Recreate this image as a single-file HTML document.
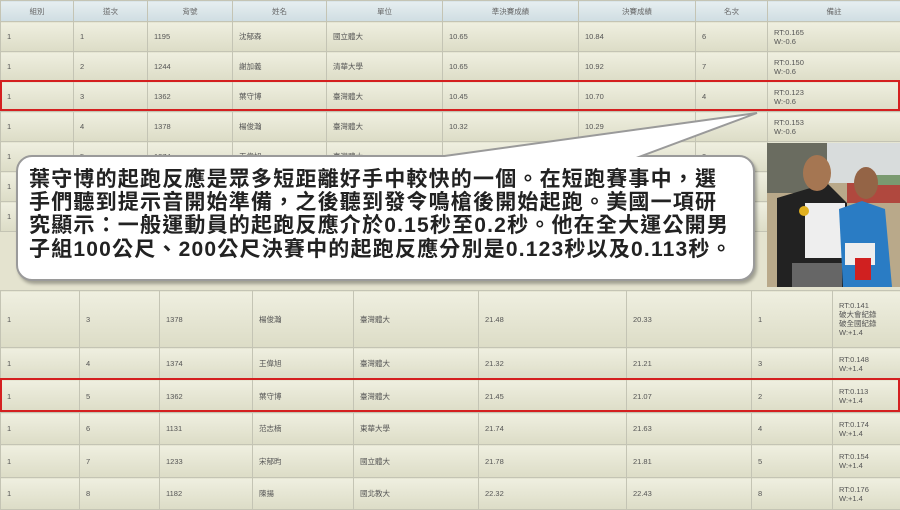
<!DOCTYPE html>
<html><head><meta charset="utf-8"><style>
*{margin:0;padding:0;box-sizing:border-box}
body{width:900px;height:506px;overflow:hidden;background:#e4e3cf;position:relative;font-family:"Liberation Sans","Noto Sans CJK TC",sans-serif;color:#555}
table{position:absolute;left:0;border-collapse:collapse;width:900px;table-layout:fixed}
td,th{border:1px solid #c4c4b4;font-size:7.5px;padding-left:6px;text-align:left;font-weight:normal;line-height:9px}
th{background:linear-gradient(#e6eef0,#cfdde2);text-align:center;padding:0;color:#666}
td{background:linear-gradient(#efefe0,#dcdcc6)}
.red{position:absolute;border:2px solid #d42020}
.call{position:absolute;left:16px;top:155px;width:739px;height:126px;background:#fff;border:2px solid #9a9a9a;border-radius:16px;box-shadow:2px 3px 3px rgba(0,0,0,.3)}
.txt{position:absolute;left:29px;top:168px;font-size:21px;letter-spacing:1.2px;font-weight:bold;color:#222;line-height:23.2px;white-space:nowrap;font-family:"Liberation Sans","Noto Sans CJK TC",sans-serif}
</style></head><body>
<table style="top:0">
<colgroup><col style="width:73px"><col style="width:74px"><col style="width:85px"><col style="width:94px"><col style="width:116px"><col style="width:136px"><col style="width:117px"><col style="width:72px"><col style="width:133px"></colgroup>
<tr style="height:21px"><th>組別</th><th>道次</th><th>背號</th><th>姓名</th><th>單位</th><th>準決賽成績</th><th>決賽成績</th><th>名次</th><th>備註</th></tr>
<tr style="height:30px"><td>1</td><td>1</td><td>1195</td><td>沈郁森</td><td>國立體大</td><td>10.65</td><td>10.84</td><td>6</td><td>RT:0.165<br>W:-0.6</td></tr>
<tr style="height:30px"><td>1</td><td>2</td><td>1244</td><td>謝加義</td><td>清華大學</td><td>10.65</td><td>10.92</td><td>7</td><td>RT:0.150<br>W:-0.6</td></tr>
<tr style="height:30px"><td>1</td><td>3</td><td>1362</td><td>葉守博</td><td>臺灣體大</td><td>10.45</td><td>10.70</td><td>4</td><td>RT:0.123<br>W:-0.6</td></tr>
<tr style="height:30px"><td>1</td><td>4</td><td>1378</td><td>楊俊瀚</td><td>臺灣體大</td><td>10.32</td><td>10.29</td><td></td><td>RT:0.153<br>W:-0.6</td></tr>
<tr style="height:30px"><td>1</td><td>5</td><td>1374</td><td>王偉旭</td><td>臺灣體大</td><td></td><td></td><td>3</td><td></td></tr>
<tr style="height:30px"><td>1</td><td></td><td></td><td></td><td></td><td></td><td></td><td>6</td><td></td></tr>
<tr style="height:30px"><td>1</td><td></td><td></td><td></td><td></td><td></td><td></td><td>7</td><td></td></tr>
</table>
<table style="top:290px">
<colgroup><col style="width:79px"><col style="width:80px"><col style="width:93px"><col style="width:101px"><col style="width:125px"><col style="width:148px"><col style="width:125px"><col style="width:81px"><col style="width:68px"></colgroup>
<tr style="height:57px"><td>1</td><td>3</td><td>1378</td><td>楊俊瀚</td><td>臺灣體大</td><td>21.48</td><td>20.33</td><td>1</td><td>RT:0.141<br>破大會紀錄<br>破全國紀錄<br>W:+1.4</td></tr>
<tr style="height:32px"><td>1</td><td>4</td><td>1374</td><td>王偉旭</td><td>臺灣體大</td><td>21.32</td><td>21.21</td><td>3</td><td>RT:0.148<br>W:+1.4</td></tr>
<tr style="height:33px"><td>1</td><td>5</td><td>1362</td><td>葉守博</td><td>臺灣體大</td><td>21.45</td><td>21.07</td><td>2</td><td>RT:0.113<br>W:+1.4</td></tr>
<tr style="height:32px"><td>1</td><td>6</td><td>1131</td><td>范志楠</td><td>東華大學</td><td>21.74</td><td>21.63</td><td>4</td><td>RT:0.174<br>W:+1.4</td></tr>
<tr style="height:33px"><td>1</td><td>7</td><td>1233</td><td>宋郁昀</td><td>國立體大</td><td>21.78</td><td>21.81</td><td>5</td><td>RT:0.154<br>W:+1.4</td></tr>
<tr style="height:32px"><td>1</td><td>8</td><td>1182</td><td>陳揚</td><td>國北教大</td><td>22.32</td><td>22.43</td><td>8</td><td>RT:0.176<br>W:+1.4</td></tr>
</table>
<div class="red" style="left:0;top:80px;width:900px;height:31px"></div>
<div class="red" style="left:0;top:378px;width:900px;height:34px"></div>
<div class="call"></div>
<svg style="position:absolute;left:0;top:0" width="900" height="506"><polygon points="430,158 757,113 636,158" fill="#fff" stroke="#9a9a9a" stroke-width="2"/><rect x="420" y="157" width="230" height="6" fill="#fff"/></svg>
<div class="txt">葉守博的起跑反應是眾多短距離好手中較快的一個。在短跑賽事中，選<br>手們聽到提示音開始準備，之後聽到發令鳴槍後開始起跑。美國一項研<br>究顯示：一般運動員的起跑反應介於0.15秒至0.2秒。他在全大運公開男<br>子組100公尺、200公尺決賽中的起跑反應分別是0.123秒以及0.113秒。</div>
<svg style="position:absolute;left:767px;top:143px" width="133" height="144">
<rect width="133" height="144" fill="#b9a98a"/>
<rect width="133" height="40" fill="#d8dcdc"/>
<rect x="0" y="0" width="60" height="50" fill="#6a6c60"/>
<rect x="80" y="40" width="53" height="20" fill="#b0483e"/>
<rect x="90" y="32" width="43" height="10" fill="#7a9a70"/>
<path d="M10 55 L60 40 L80 60 L80 144 L10 144Z" fill="#222"/>
<ellipse cx="50" cy="30" rx="14" ry="18" fill="#a57652"/>
<rect x="38" y="60" width="40" height="55" fill="#eee"/>
<rect x="25" y="120" width="50" height="24" fill="#666"/>
<path d="M72 66 L95 58 L118 66 L125 144 L76 144Z" fill="#2a7cc4"/>
<ellipse cx="99" cy="40" rx="12" ry="16" fill="#946446"/>
<rect x="78" y="100" width="30" height="22" fill="#eee"/>
<rect x="88" y="115" width="16" height="22" fill="#d02020"/>
<circle cx="37" cy="68" r="5" fill="#e0b020"/>
</svg>
</body></html>
